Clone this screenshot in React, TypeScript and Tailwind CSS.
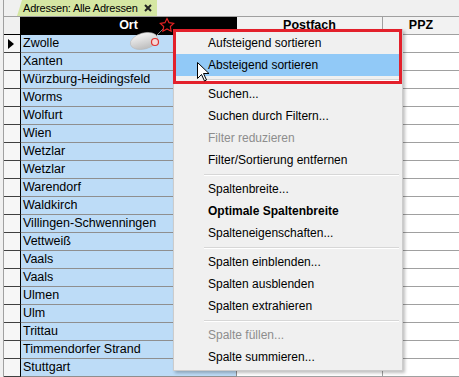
import React from 'react';

const orte = [
    'Zwolle', 'Xanten', 'Würzburg-Heidingsfeld', 'Worms', 'Wolfurt', 'Wien', 'Wetzlar', 'Wetzlar',
    'Warendorf', 'Waldkirch', 'Villingen-Schwenningen', 'Vettweiß', 'Vaals', 'Vaals', 'Ulmen', 'Ulm',
    'Trittau', 'Timmendorfer Strand', 'Stuttgart',
];

type MenuEntry = { label?: string; sep?: boolean; disabled?: boolean; bold?: boolean; active?: boolean };

const menu: MenuEntry[] = [
    { label: 'Aufsteigend sortieren' },
    { label: 'Absteigend sortieren', active: true },
    { sep: true },
    { label: 'Suchen...' },
    { label: 'Suchen durch Filtern...' },
    { label: 'Filter reduzieren', disabled: true },
    { label: 'Filter/Sortierung entfernen' },
    { sep: true },
    { label: 'Spaltenbreite...' },
    { label: 'Optimale Spaltenbreite', bold: true },
    { label: 'Spalteneigenschaften...' },
    { sep: true },
    { label: 'Spalten einblenden...' },
    { label: 'Spalten ausblenden' },
    { label: 'Spalten extrahieren' },
    { sep: true },
    { label: 'Spalte füllen...', disabled: true },
    { label: 'Spalte summieren...' },
];

const ContextMenu: React.FC = () => (
    <div className="absolute left-[173px] top-[29px] w-[230px] border border-[#cccccc] bg-[#f0f0f0] py-[2px] px-[2px] shadow-[2px_2px_3px_rgba(0,0,0,0.25)]">
        {menu.map((m, i) =>
            m.sep ? (
                <div key={i} className="h-[7px] flex items-center">
                    <div className="ml-[28px] mr-[1px] flex-1 border-t border-[#d7d7d7] border-b border-b-white" />
                </div>
            ) : (
                <div
                    key={i}
                    className={`h-[22px] flex items-center pl-[32px] text-[12px] whitespace-nowrap ${m.active ? 'bg-[#91c9f7]' : ''} ${m.disabled ? 'text-[#8d8d8d]' : 'text-black'} ${m.bold ? 'font-bold' : ''}`}
                >
                    {m.label}
                </div>
            )
        )}
    </div>
);

const App: React.FC = () => {
    return (
        <div className="relative w-[459px] h-[377px] overflow-hidden bg-[#f0f0f0] font-['Liberation_Sans',Arial,sans-serif] text-black">
            <div className="ml-[3px] border-l border-[#a0a0a0] h-full">
                {/* tab strip */}
                <div className="h-[16px] pl-[13px] flex items-end">
                    <div className="h-[16px] w-[140px] bg-[#d5e7a3] [clip-path:polygon(5px_0,100%_0,100%_100%,0_100%)] flex items-center pl-[6px] gap-[6px]">
                        <span className="text-[11px] tracking-[-0.2px] leading-none whitespace-nowrap">Adressen: Alle Adressen</span>
                        <svg width="8" height="8" viewBox="0 0 8 8">
                            <path d="M1 1 L7 7 M7 1 L1 7" stroke="#222" strokeWidth="2" />
                        </svg>
                    </div>
                </div>

                {/* header */}
                <div className="flex h-[19px] border-t border-[#a0a0a0] bg-white">
                    <div className="w-[17px] h-full bg-[#f0f0f0] border-r border-b border-black" />
                    <div className="w-[216px] h-full bg-black border-r border-b border-black flex items-center justify-center text-white font-bold text-[12.5px]">Ort</div>
                    <div className="w-[146px] h-full bg-[#f2f2f2] border-r border-b border-[#a0a0a0] flex items-center justify-center font-bold text-[12.5px]">Postfach</div>
                    <div className="flex-1 h-full bg-[#f2f2f2] border-b border-[#a0a0a0] flex items-center justify-center font-bold text-[12.5px]">PPZ</div>
                </div>

                {orte.map((ort, i) => (
                    <div key={i} className="flex h-[18px] bg-white">
                        <div className="w-[17px] h-full bg-[#f6f6f6] border-r border-b border-r-black border-b-[#404040] flex items-center pl-[4px]">
                            {i === 0 && (
                                <svg width="6" height="10" viewBox="0 0 6 10">
                                    <polygon points="0,0 6,5 0,10" fill="#000" />
                                </svg>
                            )}
                        </div>
                        <div className="w-[216px] h-full bg-[#bddcf7] border-r border-b border-[#8f8f8f] flex items-center pl-[2px] text-[12.5px] whitespace-nowrap">{ort}</div>
                        <div className="w-[146px] h-full border-r border-b border-[#a0a0a0]" />
                        <div className="flex-1 h-full border-b border-[#a0a0a0]" />
                    </div>
                ))}
            </div>

            {/* mouse hint */}
            <svg className="absolute left-0 top-0 pointer-events-none" width="459" height="377">
                <defs>
                    <linearGradient id="mg" x1="0" y1="0" x2="0" y2="1">
                        <stop offset="0" stopColor="#f4f4f4" />
                        <stop offset="1" stopColor="#bdbdbd" />
                    </linearGradient>
                </defs>
                <ellipse cx="144" cy="41" rx="14" ry="8" transform="rotate(-15 144 41)" fill="url(#mg)" stroke="#b8b8b8" strokeWidth="0.6" />
                <path d="M156 36 L163 29" stroke="#7a7a7a" strokeWidth="1" />
                <circle cx="155" cy="42" r="3.5" fill="#f6d6d6" stroke="#e03030" strokeWidth="1.2" />
                <polygon
                    points="167,18.5 169.06,22.67 173.66,23.34 170.33,26.58 171.11,31.16 167,29 162.89,31.16 163.67,26.58 160.34,23.34 164.94,22.67"
                    fill="none"
                    stroke="#e52222"
                    strokeWidth="1.2"
                />
            </svg>

            <ContextMenu />

            {/* highlight frame */}
            <div className="absolute left-[173px] top-[29px] w-[229px] h-[55px] border-[3px] border-[#e3202b]" />

            {/* cursor */}
            <svg className="absolute left-0 top-0 pointer-events-none" width="459" height="377">
                <path d="M197.5 62.5 L197.5 78.5 L201.5 74.5 L204.5 81 L206.5 80 L203.5 73.5 L209 73.5 Z" fill="#fff" stroke="#000" strokeWidth="1" />
            </svg>
        </div>
    );
};

export default App;
